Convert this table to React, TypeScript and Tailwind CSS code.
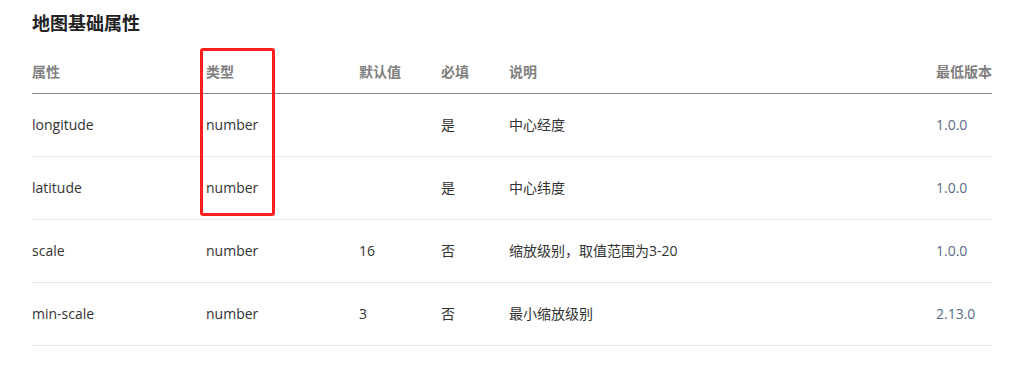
const columns = [
  { key: "name", label: "属性", width: "w-[174px]" },
  { key: "type", label: "类型", width: "w-[153px]" },
  { key: "def", label: "默认值", width: "w-[82px]" },
  { key: "req", label: "必填", width: "w-[68px]" },
  { key: "desc", label: "说明", width: "w-[427px]" },
  { key: "ver", label: "最低版本", width: "w-[56px]" },
];

const rows = [
  { name: "longitude", type: "number", def: "", req: "是", desc: "中心经度", ver: "1.0.0" },
  { name: "latitude", type: "number", def: "", req: "是", desc: "中心纬度", ver: "1.0.0" },
  { name: "scale", type: "number", def: "16", req: "否", desc: "缩放级别，取值范围为3-20", ver: "1.0.0" },
  { name: "min-scale", type: "number", def: "3", req: "否", desc: "最小缩放级别", ver: "2.13.0" },
];

export default function App() {
  return (
    <div
      className="relative w-[1016px] h-[370px] bg-white px-8 pt-[11px] text-[#333]"
      style={{ fontFamily: '"Open Sans", "Noto Sans CJK SC", sans-serif' }}
    >
      <h2 className="text-[18px] leading-6 font-bold text-[#222]">地图基础属性</h2>

      <table className="mt-[15px] w-[960px] table-fixed border-collapse">
        <thead>
          <tr className="h-[43px] border-b border-[#888]">
            {columns.map((c) => (
              <th
                key={c.key}
                className={`${c.width} p-0 text-left align-middle text-[14px] font-semibold text-[#808080]`}
              >
                {c.label}
              </th>
            ))}
          </tr>
        </thead>
        <tbody>
          {rows.map((r) => (
            <tr key={r.name} className="h-[63px] border-b border-[#e5e5e5]">
              <td className="p-0 text-[14px]">{r.name}</td>
              <td className="p-0 text-[14px]">{r.type}</td>
              <td className="p-0 text-[14px]">{r.def}</td>
              <td className="p-0 text-[14px]">{r.req}</td>
              <td className="p-0 text-[14px]">{r.desc}</td>
              <td className="p-0 text-[14px] text-[#5b6b8a]">{r.ver}</td>
            </tr>
          ))}
        </tbody>
      </table>

      {/* highlight around the type column */}
      <div className="absolute left-[200px] top-[48px] w-[75px] h-[168px] border-[3px] border-[#ff1f1f] rounded-[3px] pointer-events-none" />
    </div>
  );
}
